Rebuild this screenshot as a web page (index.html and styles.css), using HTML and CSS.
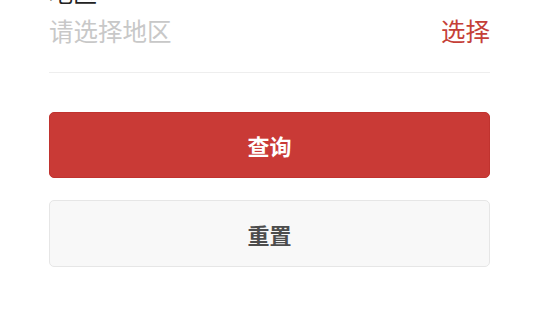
FILE: index.html
```html
<!DOCTYPE html>
<html lang="zh-CN">
<head>
    <meta charset="UTF-8">
    <meta name="viewport" content="width=device-width, initial-scale=1.0">
    <title>地区查询</title>
    <link rel="stylesheet" href="styles.css">
</head>
<body>
    <!-- Region field -->
    <div class="field">
        <div class="field-label">地区</div>
        <div class="field-row">
            <span class="placeholder">请选择地区</span>
            <a class="pick">选择</a>
        </div>
    </div>
    <!-- Buttons -->
    <div class="actions">
        <button class="btn btn-primary">查询</button>
        <button class="btn btn-default">重置</button>
    </div>
</body>
</html>
```

FILE: styles.css
```css
/* General styling */
body {
    margin: 0;
    background: #fff;
    font-family: "Noto Sans CJK SC", "Noto Sans", sans-serif;
    overflow: hidden;
}
.field {
    padding: 0 50px 0 49px;
}
.field-label {
    margin-top: -23px;
    font-size: 24px;
    line-height: 30px;
    color: #222;
}
.field-row {
    display: flex;
    justify-content: space-between;
    align-items: center;
    margin-top: 7px;
    padding-bottom: 24px;
    font-size: 24.5px;
    line-height: 34px;
    border-bottom: 1px solid #eeeeee;
}
.placeholder {
    color: #c8c8c8;
}
.pick {
    color: #c53f38;
}
/* Buttons */
.actions {
    display: flex;
    flex-direction: column;
    gap: 22px;
    padding: 0 50px 0 49px;
    margin-top: 39px;
}
.btn {
    display: block;
    width: 100%;
    font-family: inherit;
    font-size: 22px;
    font-weight: bold;
    border-radius: 5px;
    cursor: pointer;
}
.btn-primary {
    height: 66px;
    background: #c93a36;
    border: 1px solid #c0332f;
    color: #fff;
}
.btn-default {
    height: 67px;
    background: #f8f8f8;
    border: 1px solid #e6e6e6;
    color: #4d4d4d;
}
```
